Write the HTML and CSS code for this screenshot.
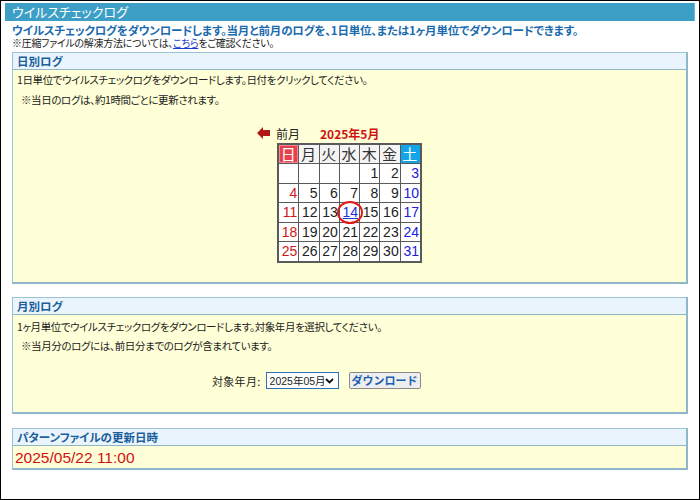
FILE: index.html
```html
<!DOCTYPE html>
<html lang="ja">
<head>
<meta charset="utf-8">
<link rel="stylesheet" href="styles.css">
</head>
<body>
<div class="page">
  <div class="header">ウイルスチェックログ</div>
  <div class="lead">ウイルスチェックログをダウンロードします。当月と前月のログを、1日単位、または1ヶ月単位でダウンロードできます。</div>
  <div class="note">※圧縮ファイルの解凍方法については、<a href="#" class="link">こちら</a>をご確認ください。</div>

  <div class="box box-daily">
    <div class="box-title">日別ログ</div>
    <div class="box-body">
      <p class="line">1日単位でウイルスチェックログをダウンロードします。日付をクリックしてください。</p>
      <p class="line indent">※当日のログは、約1時間ごとに更新されます。</p>
      <div class="cal-wrap">
        <div class="cal">
          <div class="cal-nav">
            <svg class="arrow" width="13" height="12" viewBox="0 0 13 12"><path d="M0 6 L6 0 L6 3 L13 3 L13 9 L6 9 L6 12 Z" fill="#b01818"/></svg>
            <span class="prev">前月</span>
            <span class="month">2025年5月</span>
          </div>
          <table class="cal-table">
            <tr class="head"><th class="sun">日</th><th>月</th><th>火</th><th>水</th><th>木</th><th>金</th><th class="sat">土</th></tr>
            <tr><td></td><td></td><td></td><td></td><td>1</td><td>2</td><td class="sat">3</td></tr>
            <tr><td class="sun">4</td><td>5</td><td>6</td><td>7</td><td>8</td><td>9</td><td class="sat">10</td></tr>
            <tr><td class="sun">11</td><td>12</td><td>13</td><td class="today"><a href="#" class="day-link">14</a><span class="ring"></span></td><td>15</td><td>16</td><td class="sat">17</td></tr>
            <tr><td class="sun">18</td><td>19</td><td>20</td><td>21</td><td>22</td><td>23</td><td class="sat">24</td></tr>
            <tr><td class="sun">25</td><td>26</td><td>27</td><td>28</td><td>29</td><td>30</td><td class="sat">31</td></tr>
          </table>
        </div>
      </div>
    </div>
  </div>

  <div class="box box-monthly">
    <div class="box-title">月別ログ</div>
    <div class="box-body">
      <p class="line">1ヶ月単位でウイルスチェックログをダウンロードします。対象年月を選択してください。</p>
      <p class="line indent">※当月分のログには、前日分までのログが含まれています。</p>
      <div class="form-row">
        <span class="label">対象年月:</span>
        <span class="sel-wrap">
          <select class="sel"><option>2025年05月</option><option>2025年04月</option></select>
          <svg class="chev" width="9" height="6" viewBox="0 0 9 6"><path d="M1 1 L4.5 4.5 L8 1" fill="none" stroke="#111" stroke-width="1.8"/></svg>
        </span>
        <button class="btn">ダウンロード</button>
      </div>
    </div>
  </div>

  <div class="box box-pattern">
    <div class="box-title">パターンファイルの更新日時</div>
    <div class="box-body">
      <div class="stamp">2025/05/22 11:00</div>
    </div>
  </div>
</div>
</body>
</html>
```
FILE: styles.css
```css
html, body {
  margin: 0;
  padding: 0;
}
body {
  font-family: "Noto Sans CJK JP", "Liberation Sans", sans-serif;
  font-feature-settings: "palt";
  color: #222;
  background: #fff;
}
.page {
  width: 700px;
  height: 500px;
  box-sizing: border-box;
  border: 1px solid #000;
  padding: 2px 4px 0 4px;
}
.header {
  background: #3d9fc6;
  color: #fff;
  font-size: 13px;
  height: 18px;
  line-height: 18px;
  padding-left: 7px;
  border-right: 1px solid #6fb8d6;
}
.lead {
  color: #1a6ab0;
  font-weight: bold;
  font-size: 11.5px;
  line-height: 14px;
  margin: 2px 0 0 7px;
  letter-spacing: -0.2px;
}
.note {
  font-size: 10px;
  line-height: 11px;
  margin: 0 0 0 7px;
  letter-spacing: -0.3px;
}
.link {
  color: #1a3ad0;
  text-decoration: underline;
}
.box {
  margin: 0 7px;
  border: 1px solid #9cc2d4;
  border-right: 2px solid #8fb6c9;
  border-bottom: 2px solid #8fb6c9;
  background: #ffffd8;
}
.box-daily { margin-top: 4px; }
.box-monthly { margin-top: 13px; }
.box-pattern { margin-top: 14px; }
.box-title {
  background: #eaf4fd;
  color: #1a5e9a;
  font-weight: bold;
  font-size: 11.5px;
  height: 16px;
  line-height: 16px;
  padding-left: 4px;
  border-bottom: 1px solid #8fb6c9;
}
.box-body {
  padding: 0 4px;
}
.line {
  margin: 0;
  font-size: 10.5px;
  line-height: 20px;
  letter-spacing: -0.4px;
}
.indent { padding-left: 4px; }
.box-daily .box-body { height: 212px; }
.box-monthly .box-body { height: 97px; padding-top: 2px; box-sizing: border-box; }
.box-monthly .line { line-height: 19px; }
.box-pattern .box-body { height: 22px; padding: 0 2px; }

.cal-wrap {
  display: flex;
  justify-content: center;
  margin-top: 13px;
}
.cal { width: 145px; }
.cal-nav {
  display: flex;
  align-items: center;
  margin-left: -20px;
  height: 20px;
  font-size: 12px;
}
.arrow { margin-right: 6px; }
.prev { color: #222; }
.month {
  color: #d01010;
  font-weight: bold;
  margin-left: 20px;
  font-size: 12px;
}
.cal-table {
  width: 145px;
  border-collapse: separate;
  border-spacing: 1px;
  background: #5a5a5a;
  border: 1px solid #5a5a5a;
  table-layout: fixed;
}
.cal-table th, .cal-table td {
  height: 18.5px;
  padding: 0 1px 0 0;
  background: #fff;
  box-sizing: border-box;
}
.cal-table th {
  height: 18px;
  font-weight: normal;
  font-size: 15px;
  line-height: 18px;
  text-align: center;
  color: #333;
  background: #f4f4f4;
}
.cal-table th.sun {
  background: #e8404c;
  color: #fff;
  box-shadow: inset 0 0 0 1px #f28890;
}
.cal-table th.sat {
  background: #14a4e8;
  color: #fff;
}
.cal-table td {
  font-family: "Liberation Sans", sans-serif;
  font-size: 14px;
  text-align: right;
  color: #222;
  line-height: 18px;
}
.cal-table td.sun { color: #d01818; }
.cal-table td.sat { color: #2020d8; }
.today { position: relative; }
.day-link {
  color: #2030d8;
  text-decoration: underline;
}
.ring {
  position: absolute;
  left: -3px;
  top: -2px;
  width: 22px;
  height: 19px;
  border: 2px solid #e01818;
  border-radius: 50%;
}
.form-row {
  display: flex;
  align-items: center;
  margin-top: 17px;
  margin-left: 195px;
}
.label {
  font-size: 11px;
  margin-right: 5px;
  letter-spacing: 0.3px;
}
.sel-wrap {
  position: relative;
  display: block;
  width: 73px;
  height: 17px;
}
.sel {
  appearance: none;
  -webkit-appearance: none;
  width: 73px;
  height: 17px;
  font-family: "Liberation Sans", "Noto Sans CJK JP", sans-serif;
  font-size: 10.5px;
  padding: 0 0 0 3px;
  margin: 0;
  border: 1px solid #2d6fb8;
  background: #fff;
  color: #222;
  border-radius: 0;
  display: block;
}
.chev {
  position: absolute;
  right: 5px;
  top: 6px;
  pointer-events: none;
}
.btn {
  margin-left: 10px;
  width: 72px;
  height: 17px;
  padding: 0;
  font-family: "Noto Sans CJK JP", sans-serif;
  font-weight: bold;
  font-size: 11px;
  color: #1a5fb0;
  background: #eeeeee;
  border: 1px solid #8a8a8a;
  border-radius: 2px;
  line-height: 15px;
}
.stamp {
  color: #d01010;
  font-family: "Liberation Sans", sans-serif;
  font-size: 15.5px;
  line-height: 24px;
}
```
